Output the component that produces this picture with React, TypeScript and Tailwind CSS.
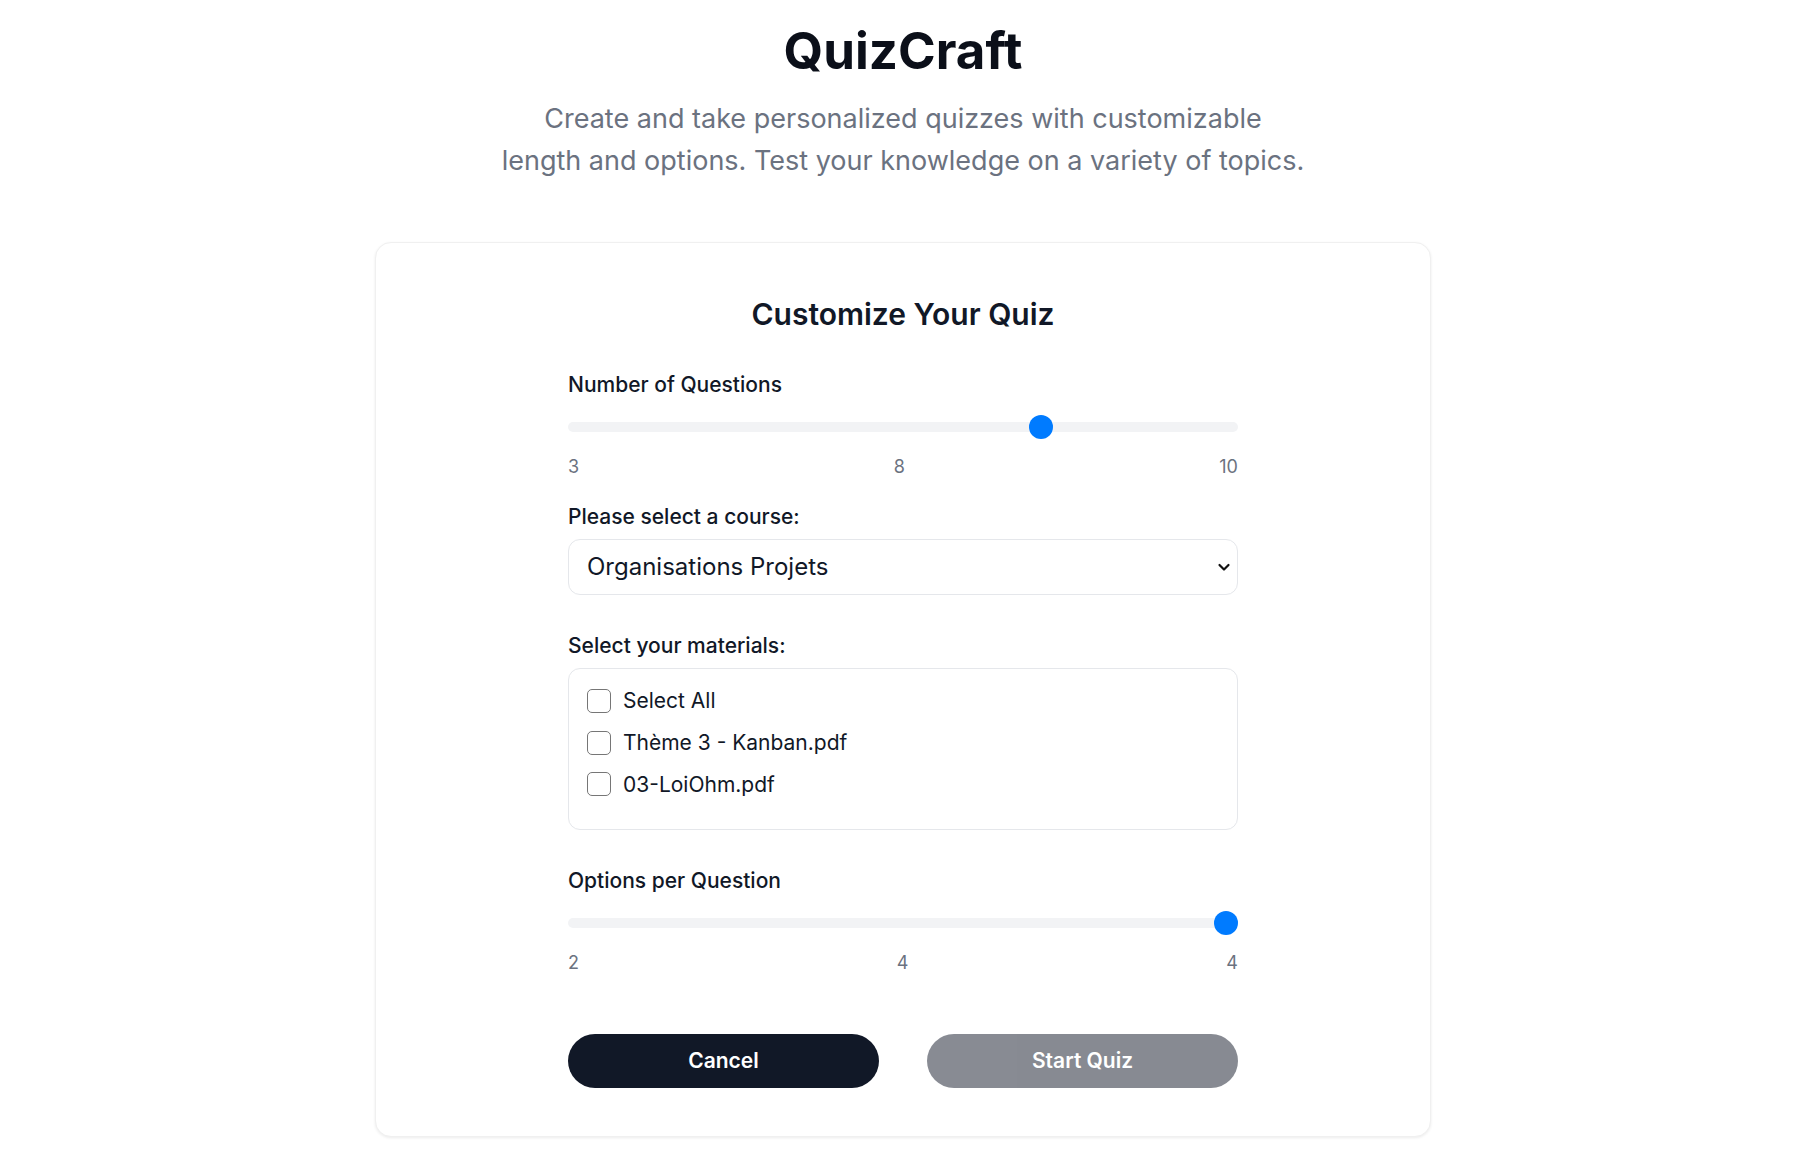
import React, { useState } from "react";

function Slider({ min, max, value, labels }: { min: number; max: number; value: number; labels: string[] }) {
  const pct = (value - min) / (max - min);
  return (
    <div>
      <div className="relative h-6 w-full">
        <div className="absolute left-0 right-0 top-[7px] h-[10px] rounded-full bg-[#f2f3f5]" />
        <div
          className="absolute top-0 h-6 w-6 rounded-full bg-[#007bff]"
          style={{ left: `calc(${pct} * (100% - 24px))` }}
        />
      </div>
      <div className="mt-4 flex justify-between text-[18px] leading-6 text-[#6b7280]">
        {labels.map((l, i) => (
          <span key={i}>{l}</span>
        ))}
      </div>
    </div>
  );
}

function Check({ label }: { label: string }) {
  return (
    <label className="flex h-7 items-center gap-[12px]">
      <span className="h-[24px] w-[24px] rounded-[5px] border-[1.5px] border-[#767676] bg-white" />
      <span className="text-[21px] text-[#111827]">{label}</span>
    </label>
  );
}

export default function App() {
  const [course] = useState("Organisations Projets");
  return (
    <div className="min-h-screen bg-white pr-[13px] font-['Inter',sans-serif] text-[#111827]">
      <div className="flex flex-col items-center pt-[27px]">
        <h1 className="text-[51px] font-bold leading-[48px] text-[#0b0f19]">QuizCraft</h1>
        <p className="mt-[23px] max-w-[900px] text-center text-[27px] leading-[42px] text-[#6b7280]">
          Create and take personalized quizzes with customizable
          <br />
          length and options. Test your knowledge on a variety of topics.
        </p>
        <div className="mt-[60px] w-[1056px] rounded-2xl border border-[#f0f0f0] bg-white px-[192px] pb-[48px] pt-[55px] shadow-[0_1px_3px_rgba(0,0,0,0.08)]">
          <h2 className="text-center text-[30px] font-semibold leading-8">Customize Your Quiz</h2>

          <div className="mt-[41px]">
            <div className="text-[21px] font-medium leading-7">Number of Questions</div>
            <div className="mt-4">
              <Slider min={3} max={10} value={8} labels={["3", "8", "10"]} />
            </div>
          </div>

          <div className="mt-[24px]">
            <div className="text-[21px] font-medium leading-7">Please select a course:</div>
            <div className="relative mt-2 flex h-14 items-center rounded-xl border border-[#e5e7eb] bg-white px-[18px]">
              <span className="text-[24px] text-[#111827]">{course}</span>
              <svg className="absolute right-[5px] top-1/2 -translate-y-1/2" width="16" height="16" viewBox="0 0 16 16">
                <path d="M3.5 6l4.5 4.5L12.5 6" fill="none" stroke="#111" strokeWidth="2.2" strokeLinecap="round" strokeLinejoin="round" />
              </svg>
            </div>
          </div>

          <div className="mt-[37px]">
            <div className="text-[21px] font-medium leading-7">Select your materials:</div>
            <div className="mt-2 flex h-[162px] flex-col gap-[13.7px] rounded-xl border border-[#e5e7eb] px-[18px] pt-[18px]">
              <Check label="Select All" />
              <Check label="Thème 3 - Kanban.pdf" />
              <Check label="03-LoiOhm.pdf" />
            </div>
          </div>

          <div className="mt-[37px]">
            <div className="text-[21px] font-medium leading-7">Options per Question</div>
            <div className="mt-4">
              <Slider min={2} max={4} value={4} labels={["2", "4", "4"]} />
            </div>
          </div>

          <div className="mt-[59px] flex gap-12">
            <button className="h-[54px] flex-1 rounded-full bg-[#111827] text-[21px] font-semibold text-white">Cancel</button>
            <button disabled className="h-[54px] flex-1 rounded-full bg-[#111827] text-[21px] font-semibold text-white opacity-50">
              Start Quiz
            </button>
          </div>
        </div>
      </div>
    </div>
  );
}
